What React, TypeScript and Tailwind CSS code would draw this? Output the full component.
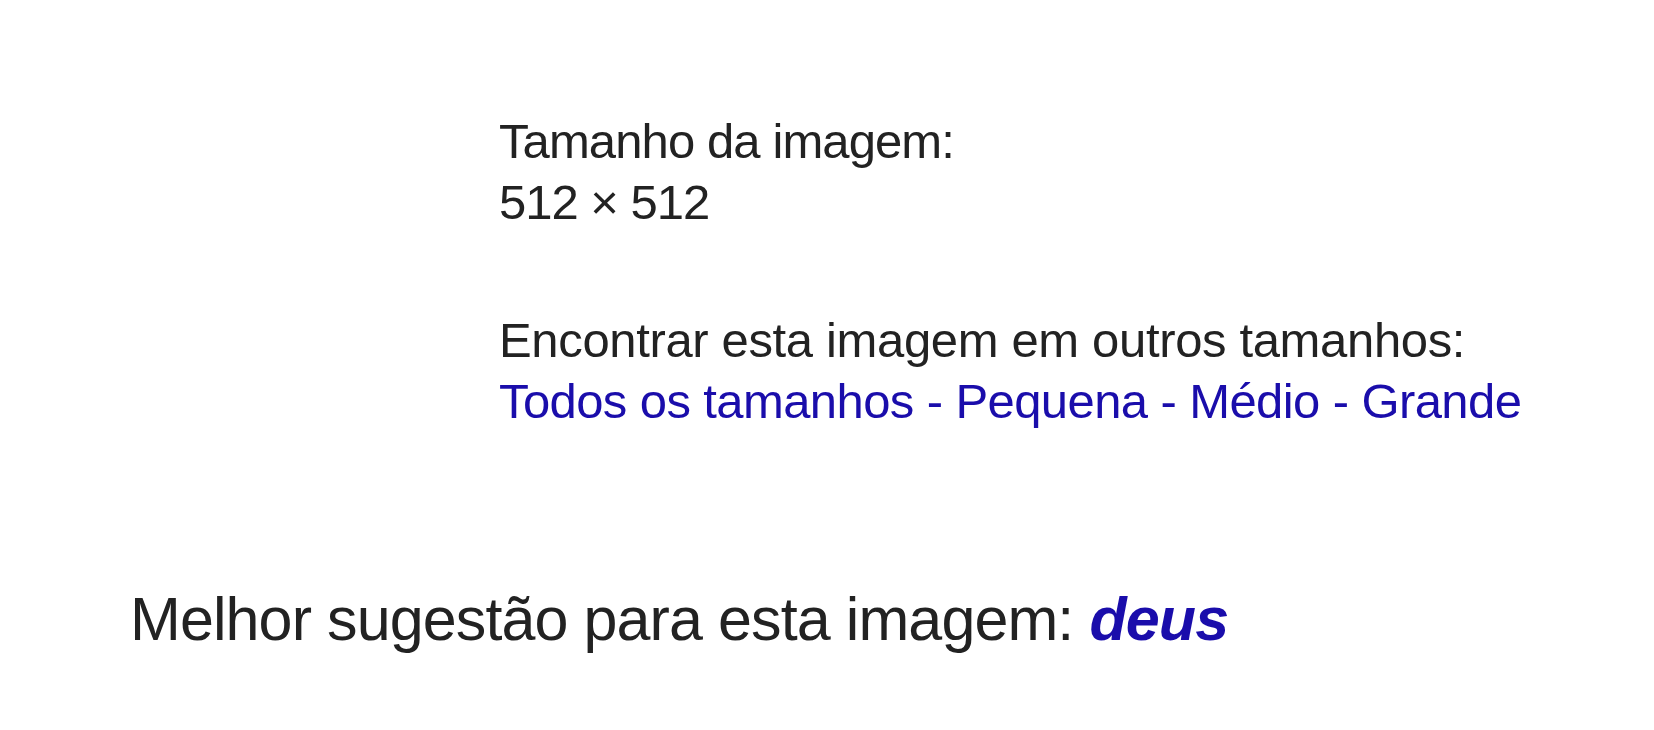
export default function App() {
  return (
    <div className="w-[1654px] h-[730px] bg-white overflow-hidden font-['Liberation_Sans',Arial,sans-serif] text-[#222222]">
      <div className="flex flex-col pt-[111px]">
        <div className="ml-[499px] flex flex-col text-[49px] leading-[61px]">
          <div className="tracking-[-0.9px]">Tamanho da imagem:</div>
          <div className="tracking-[-1px]">512 × 512</div>
          <div className="mt-[77px] tracking-[-0.35px]">Encontrar esta imagem em outros tamanhos:</div>
          <div className="tracking-[-0.6px] text-[#1a0dab]">
            <a className="cursor-pointer">Todos os tamanhos</a>
            <span> - </span>
            <a className="cursor-pointer">Pequena</a>
            <span> - </span>
            <a className="cursor-pointer">Médio</a>
            <span> - </span>
            <a className="cursor-pointer">Grande</a>
          </div>
        </div>
        <div className="ml-[130px] mt-[151px] text-[61px] leading-[72px] tracking-[-0.9px]">
          Melhor sugestão para esta imagem:{" "}
          <a className="font-bold italic text-[#1a0dab] cursor-pointer">deus</a>
        </div>
      </div>
    </div>
  );
}
